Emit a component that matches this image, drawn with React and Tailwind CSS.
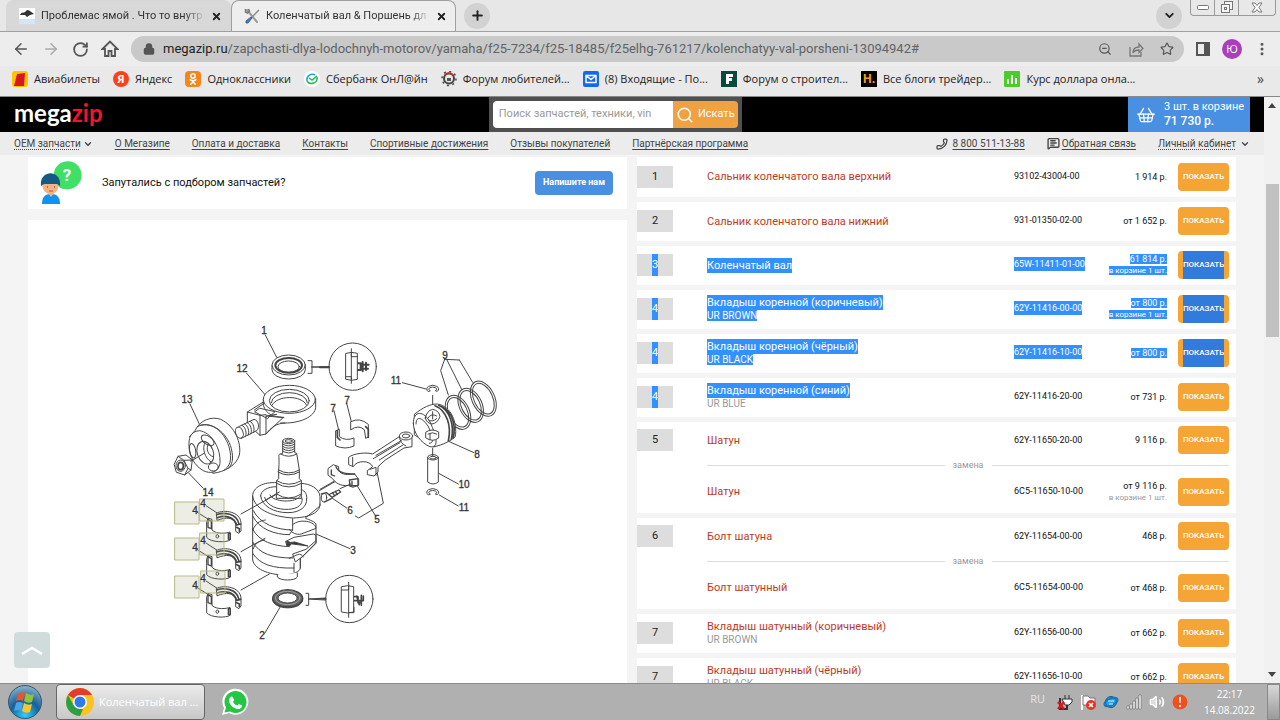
import React from "react";
import {
  ArrowLeft,
  ArrowRight,
  RotateCw,
  Lock,
  ZoomOut,
  Star,
  Search,
  ChevronDown,
  Plus,
  X,
  EllipsisVertical,
  Phone,
  MessageSquareText,
  ShoppingBasket,
  Volume2,
} from "lucide-react";
import { FaOdnoklassniki } from "react-icons/fa";

const parts = [
  {
    num: "1",
    items: [{ title: "Сальник коленчатого вала верхний", code: "93102-43004-00", price: "1 914 р." }],
  },
  {
    num: "2",
    items: [{ title: "Сальник коленчатого вала нижний", code: "931-01350-02-00", price: "от 1 652 р." }],
  },
  {
    num: "3",
    selected: true,
    items: [{ title: "Коленчатый вал", code: "65W-11411-01-00", price: "61 814 р.", cart: "в корзине 1 шт." }],
  },
  {
    num: "4",
    selected: true,
    items: [
      {
        title: "Вкладыш коренной (коричневый)",
        note: "UR BROWN",
        code: "62Y-11416-00-00",
        price: "от 800 р.",
        cart: "в корзине 1 шт.",
      },
    ],
  },
  {
    num: "4",
    selected: true,
    items: [{ title: "Вкладыш коренной (чёрный)", note: "UR BLACK", code: "62Y-11416-10-00", price: "от 800 р." }],
  },
  {
    num: "4",
    titleSelected: true,
    items: [{ title: "Вкладыш коренной (синий)", note: "UR BLUE", code: "62Y-11416-20-00", price: "от 731 р." }],
  },
  {
    num: "5",
    items: [
      { title: "Шатун", code: "62Y-11650-20-00", price: "9 116 р." },
      { title: "Шатун", code: "6C5-11650-10-00", price: "от 9 116 р.", cart: "в корзине 1 шт." },
    ],
  },
  {
    num: "6",
    items: [
      { title: "Болт шатуна", code: "62Y-11654-00-00", price: "468 р." },
      { title: "Болт шатунный", code: "6C5-11654-00-00", price: "от 468 р." },
    ],
  },
  {
    num: "7",
    items: [{ title: "Вкладыш шатунный (коричневый)", note: "UR BROWN", code: "62Y-11656-00-00", price: "от 662 р." }],
  },
  {
    num: "7",
    items: [{ title: "Вкладыш шатунный (чёрный)", note: "UR BLACK", code: "62Y-11656-10-00", price: "от 662 р." }],
  },
];

const Tab = ({ icon, title, active }) => (
  <div
    className={`flex h-full w-[225px] items-center gap-1.5 rounded-t-lg border border-b-0 pl-3 pr-2 ${
      active ? "border-[#a0a0a0] bg-[#eeeeee]" : "border-[#d6d6d6] bg-[#d8d8d8]"
    }`}
  >
    {icon}
    <span className="min-w-0 flex-1 whitespace-nowrap font-[Roboto,sans-serif] text-[11px] text-[#333] [mask-image:linear-gradient(to_right,black_88%,transparent)]">
      {title}
    </span>
    <button aria-label="Закрыть вкладку">
      <X size={11} strokeWidth={4} color="#222" />
    </button>
  </div>
);

const WindowButtons = () => (
  <div className="flex h-4 self-start rounded-b border border-t-0 border-[#9a9a9a] bg-[#e8e8e8]">
    <button aria-label="Свернуть" className="flex w-6 items-center justify-center border-r border-[#9a9a9a]">
      <svg width="12" height="6" fill="#fff" stroke="#777">
        <rect x="0.5" y="0.5" width="11" height="4" rx="1" />
      </svg>
    </button>
    <button aria-label="Развернуть" className="flex w-6 items-center justify-center border-r border-[#9a9a9a]">
      <svg width="14" height="13" fill="#f5f5f5" stroke="#777">
        <rect x="4.5" y="0.5" width="8" height="8" />
        <rect x="1.5" y="3.5" width="8" height="8" />
        <rect x="4.5" y="6.5" width="2" height="2" />
      </svg>
    </button>
    <button aria-label="Закрыть" className="flex w-9 items-center justify-center">
      <svg width="12" height="11" viewBox="0 0 12 11" fill="#fff" stroke="#777">
        <path d="M1 1h3l2 2.500L8 1h3L8 5.500 11 10H8L6 7.500 4 10H1L4 5.500z" />
      </svg>
    </button>
  </div>
);

const TabStrip = () => (
  <div className="flex h-8 items-center border-b border-[#a0a0a0] bg-[#e7e7e7] pl-1.5 pr-1">
    <div className="flex h-full">
      <Tab
        title="Проблемас ямой . Что то внутр"
        icon={
          <svg width="16" height="16" viewBox="0 0 16 16">
            <rect width="16" height="16" fill="#fff" />
            <path d="M1 7c2-4 4-1 6-4s5 1 8 3l-4 1-3 2-2-2z" fill="#333" />
            <path d="M0 11h16v5H0z" fill="#d4e6f5" />
          </svg>
        }
      />
      <Tab
        active
        title="Коленчатый вал & Поршень дл"
        icon={
          <svg width="16" height="16" viewBox="0 0 16 16" fill="none">
            <path d="M3 2l10 12" stroke="#999" strokeWidth="2" strokeLinecap="round" />
            <path d="M1.500 1v3l2 1 2-2-1-2" stroke="#777" strokeWidth="1.5" />
            <path d="M15 2l-8 8" stroke="#888" strokeWidth="1.5" />
            <path d="M7 9l-5 4v2h2l4-5z" fill="#4d79b8" stroke="#3c6299" />
          </svg>
        }
      />
    </div>
    <button aria-label="Новая вкладка" className="ml-2 flex size-[26px] items-center justify-center rounded-full bg-[#d2d2d2]">
      <Plus size={15} strokeWidth={3} color="#222" />
    </button>
    <button aria-label="Поиск вкладок" className="ml-auto mr-2 flex size-[26px] items-center justify-center rounded-full bg-[#d2d2d2]">
      <ChevronDown size={13} strokeWidth={3.5} color="#222" />
    </button>
    <WindowButtons />
  </div>
);

const Toolbar = () => (
  <div className="flex h-[34px] items-center bg-[#ededed] pl-3 pr-2.5">
    <div className="flex items-center gap-3">
      <button aria-label="Назад"><ArrowLeft size={18} color="#555" /></button>
      <button aria-label="Вперёд"><ArrowRight size={18} color="#aaa" /></button>
      <button aria-label="Обновить"><RotateCw size={17} strokeWidth={2.5} color="#555" /></button>
      <button aria-label="Домой">
        <svg width="18" height="18" fill="none" stroke="#555" strokeWidth="1.8">
          <path d="M1.500 9L9 1.500 16.500 9H14v7h-3.500v-5h-3v5H4V9z" />
        </svg>
      </button>
    </div>
    <div className="ml-3 flex h-[26px] min-w-0 flex-1 items-center rounded-full bg-[#c9c9c9] pl-3 pr-2.5 font-[Roboto,sans-serif] text-[13px]">
      <Lock size={12} strokeWidth={3} color="#555" fill="#555" />
      <label htmlFor="url" className="ml-2 text-[#222]">megazip.ru</label>
      <input
        id="url"
        className="min-w-0 flex-1 bg-transparent text-[#5f6368] outline-none"
        defaultValue="/zapchasti-dlya-lodochnyh-motorov/yamaha/f25-7234/f25-18485/f25elhg-761217/kolenchatyy-val-porsheni-13094942#"
      />
      <div className="flex items-center gap-4">
        <button aria-label="Масштаб"><ZoomOut size={14} color="#555" /></button>
        <button aria-label="Поделиться">
          <svg width="16" height="15" fill="none" stroke="#777" strokeWidth="1.3">
            <path d="M2 5v9h11v-4M5 11c0-4 2-6 6-6V2l4 4.500-4 4V8c-3 0-5 1-6 3z" />
          </svg>
        </button>
        <button aria-label="В закладки"><Star size={14} color="#555" /></button>
      </div>
    </div>
    <button aria-label="Боковая панель" className="ml-3">
      <svg width="14" height="14" fill="none" stroke="#555" strokeWidth="2">
        <rect x="1" y="1" width="12" height="12" />
        <rect x="9" y="1" width="4" height="12" fill="#555" />
      </svg>
    </button>
    <button aria-label="Профиль" className="ml-3 size-5 rounded-full bg-[#a93fbb] text-[11px] leading-5 text-white">Ю</button>
    <button aria-label="Меню" className="ml-3"><EllipsisVertical size={16} strokeWidth={2.5} color="#555" /></button>
  </div>
);

const bookmarks = [
  {
    title: "Авиабилеты",
    icon: <svg width="16" height="16"><rect width="16" height="16" rx="3" fill="#ffc400" /><path d="M5 3l8-1-1 13H2z" fill="#d9161e" /></svg>,
  },
  {
    title: "Яндекс",
    icon: <span className="flex size-4 items-center justify-center rounded-full bg-[#fc3f1d] text-[11px] font-bold leading-4 text-white">Я</span>,
  },
  {
    title: "Одноклассники",
    icon: <span className="flex size-4 items-center justify-center rounded-sm bg-[#f7851c]"><FaOdnoklassniki size={12} color="#fff" /></span>,
  },
  {
    title: "Сбербанк ОнЛ@йн",
    icon: (
      <svg width="16" height="16" fill="none" strokeWidth="1.5">
        <circle cx="8" cy="8" r="8" fill="#fff" />
        <path d="M3 10a5.500 5.500 0 0 1 8-6" stroke="#21a0e8" />
        <path d="M3 10a5.500 5.500 0 0 0 10-4" stroke="#21ba4f" />
        <path d="M5 7l3 2 5-4" stroke="#21ba4f" />
      </svg>
    ),
  },
  {
    title: "Форум любителей...",
    icon: (
      <svg width="16" height="16" fill="none">
        <circle cx="8" cy="7.5" r="5" stroke="#444" strokeWidth="2" />
        <circle cx="8" cy="7.5" r="7" stroke="#444" strokeWidth="1.5" strokeDasharray="2 3.5" />
        <path d="M4 4a5 5 0 0 1 8 0" stroke="#d22" strokeWidth="1.5" />
        <path d="M6 7h4v3H6z" fill="#555" />
      </svg>
    ),
  },
  {
    title: "(8) Входящие - По...",
    icon: (
      <svg width="16" height="16" fill="none" stroke="#fff">
        <rect width="16" height="16" rx="2" fill="#1268f5" stroke="none" />
        <path d="M3 4.500h10v7H3zM3 4.500l5 4 5-4" strokeWidth="1.5" />
      </svg>
    ),
  },
  {
    title: "Форум о строител...",
    icon: <svg width="16" height="16"><rect width="16" height="16" fill="#0a4a3c" /><path d="M5 3h7v3H8v1h3v3H8v3H5z" fill="#fff" /></svg>,
  },
  {
    title: "Все блоги трейдер...",
    icon: <span className="flex size-4 items-center justify-center bg-black text-[12px] font-bold leading-4 text-[#ff9d1c]">H.</span>,
  },
  {
    title: "Курс доллара онла...",
    icon: <svg width="16" height="16"><rect width="16" height="16" rx="1" fill="#4ccc2a" /><path d="M3 8h2v5H3zM7 4h2v9H7zM11 7h2v6h-2z" fill="#fff" /></svg>,
  },
];

const Bookmarks = () => (
  <div className="flex h-[31px] items-center justify-between border-b border-[#888] bg-[#e9e9e9] pb-1 pl-3 pr-4">
    <div className="flex gap-[13px]">
      {bookmarks.map((b) => (
        <a key={b.title} href="#" className="flex items-center gap-1.5 whitespace-nowrap text-[11px] text-[#222]">
          {b.icon}
          {b.title}
        </a>
      ))}
    </div>
    <button aria-label="Другие закладки" className="text-[14px] leading-4 text-[#444]">»</button>
  </div>
);

const SiteHeader = () => (
  <header className="flex h-[35px] items-center justify-between bg-black px-3.5">
    <a href="#" className="pb-1 font-[Lato,sans-serif] text-[24px] font-bold leading-6 text-white">
      mega<span className="text-[#f5132f]">zip</span>
    </a>
    <form className="flex h-full w-[253px] bg-[#505050] p-1" onSubmit={(e) => e.preventDefault()}>
      <input
        aria-label="Поиск"
        placeholder="Поиск запчастей, техники, vin"
        className="min-w-0 flex-1 rounded-l-sm bg-white px-1.5 text-[11px] outline-none placeholder:text-[#999]"
      />
      <button className="flex w-[65px] items-center justify-center gap-1 rounded-r-sm bg-[#f0a142] text-[11px] text-white">
        <Search size={18} />
        Искать
      </button>
    </form>
    <a href="#" className="flex h-full w-[122px] items-center gap-2 whitespace-nowrap bg-[#4a90e2] pl-2 text-[11px] leading-[14px] text-white">
      <ShoppingBasket size={20} strokeWidth={1.5} />
      <span>
        3 шт. в корзине
        <br />
        <strong className="text-[12px] font-medium">71 730 р.</strong>
      </span>
    </a>
  </header>
);

const navLinks = ["О Мегазипе", "Оплата и доставка", "Контакты", "Спортивные достижения", "Отзывы покупателей", "Партнёрская программа"];

const SiteNav = () => (
  <nav className="flex h-[23px] items-center justify-between whitespace-nowrap bg-[#ececec] px-3.5 text-[10px] text-[#444]">
    <div className="flex gap-[22px]">
      <a href="#" className="flex items-center gap-0.5">
        <span className="underline decoration-dotted underline-offset-2">OEM запчасти</span>
        <ChevronDown size={10} strokeWidth={3} />
      </a>
      {navLinks.map((l) => (
        <a key={l} href="#" className="underline underline-offset-2">{l}</a>
      ))}
    </div>
    <div className="flex gap-[22px]">
      <a href="#" className="flex items-center gap-1 underline underline-offset-2">
        <Phone size={12} strokeWidth={2.5} className="-scale-x-100" />
        8 800 511-13-88
      </a>
      <a href="#" className="flex items-center gap-0.5 underline underline-offset-2">
        <MessageSquareText size={13} strokeWidth={2.5} />
        Обратная связь
      </a>
      <a href="#" className="flex items-center gap-1">
        <span className="underline decoration-dotted underline-offset-2">Личный кабинет</span>
        <ChevronDown size={10} strokeWidth={3} />
      </a>
    </div>
  </nav>
);

const HelpPanel = () => (
  <section className="flex h-[52px] items-center bg-white pl-3 pr-3.5">
    <svg width="42" height="44" viewBox="0 0 42 44">
      <path d="M16 22a14 14 0 1 1 9 6c-4 0-7-2-9-6z" fill="#3fe065" />
      <text x="27" y="20" textAnchor="middle" fontSize="17" fontWeight="700" fill="#fff">?</text>
      <circle cx="10.500" cy="25" r="8" fill="#f5b183" />
      <path d="M1 25C-1 8 22 8 20 25l-3-2H4z" fill="#145a86" />
      <path d="M2 43c0-7 3-10 9-10s9 3 9 10z" fill="#0f92f0" />
      <path d="M8 32h6l-3 4z" fill="#f5b183" />
      <path d="M9 30h4" stroke="#b4552d" />
      <path d="M7 26h1M14 26h1" stroke="#333" />
    </svg>
    <p className="ml-5 flex-1 text-[11px] text-[#111]">Запутались с подбором запчастей?</p>
    <button className="h-6 w-[78px] rounded-sm bg-[#4a90e2] text-[9px] font-bold text-white">Напишите нам</button>
  </section>
);

// Pair of main bearing shells, drawn once per crank journal
const Bearing = ({ y }) => (
  <g transform={`translate(0 ${y})`}>
    <path d="M170 99C192 88 240 94 243 128V152l-6 8-10-6v-22C222 112 198 110 172 121z" />
    <path d="M170 104c22-8 60-4 66 26M172 113c22-8 50-4 58 22M230 135l12-3M230 142l8 4v8" strokeWidth="5" />
    <path d="M140 145V172C152 188 200 188 210 180V156C200 160 170 164 156 150V118l-12-4-4 12z" />
    <path d="M144 118l10 6v22l-10-4zM205 160v18h6v-18z" strokeWidth="4" />
    <ellipse cx="172" cy="169" rx="4" ry="5" />
    <path d="M112 97L145 118M138 77L170 98" />
  </g>
);

const labels = [
  ["1", 264, 334], ["12", 242, 372], ["13", 187, 403], ["14", 208, 496], ["7", 347, 404], ["7", 333, 412],
  ["11", 396, 384], ["9", 445, 359], ["8", 477, 458], ["10", 464, 488], ["11", 464, 511], ["6", 350, 514],
  ["5", 377, 523], ["3", 353, 554], ["2", 262, 639], ["4", 195, 514], ["4", 203, 507], ["4", 195, 551],
  ["4", 203, 544], ["4", 195, 589], ["4", 203, 582],
];

const hotspots = [
  [175, 502], [200, 499], [175, 538], [200, 533], [175, 576], [201, 571],
];

const Diagram = () => (
  <svg width="363" height="330" viewBox="146 320 363 330" fill="none" stroke="#444" strokeLinejoin="round" strokeLinecap="round">
    {/* upper seal, eccentric, flywheel, nut */}
    <g transform="translate(160 320) scale(.33333)" strokeWidth="3">
      <path d="M336 137v12A50 28 0 0 0 436 149V137" fill="#fff" />
      <ellipse cx="386" cy="135" rx="50" ry="30" fill="#fff" />
      <ellipse cx="386" cy="136" rx="40" ry="22" strokeWidth="6" />
      <ellipse cx="386" cy="140" rx="32" ry="17" />
      <path d="M316 45L350 112M444 122h12v38h-12M260 160L316 225M90 252L118 312M85 458L130 505" />
      <path d="M456 141H508" strokeWidth="5" />
      <path d="M310 236V256C320 285 340 290 370 292L318 342M467 236V262C465 290 420 312 362 309M310 246L262 276V312L300 346 318 342V288L372 293" fill="#fff" />
      <ellipse cx="388" cy="238" rx="78" ry="42" fill="#fff" />
      <ellipse cx="388" cy="242" rx="60" ry="34" />
      <path d="M334 248a54 30 0 0 1 108 0M336 256C350 225 426 224 440 256" />
      <path d="M262 276L300 286 318 284M300 286V346M300 265L345 275 322 296 285 276zM283 270L312 250M318 288L350 283M318 342C335 320 350 310 375 309" />
      <path d="M236 320L282 298C296 300 300 324 290 332L244 355" fill="#fff" />
      <ellipse cx="238" cy="338" rx="11" ry="17" transform="rotate(-20 238 338)" />
      <path d="M246 316c10 4 16 24 10 34M254 312c10 4 16 24 10 34M262 308c10 4 16 24 10 34M270 304c10 4 16 24 10 34" />
      <path d="M106 330C120 300 155 288 182 298 225 318 245 370 238 405 230 435 195 456 158 460L90 350z" fill="#fff" />
      <path d="M112 320C150 300 190 330 207 380 218 420 210 440 190 452M120 316C155 306 200 335 214 385 222 420 216 435 204 446" />
      <path d="M90 350C80 385 92 430 130 452 160 466 182 450 180 420 180 380 152 336 118 332 104 333 95 340 90 350z" fill="#fff" />
      <ellipse cx="143" cy="361" rx="22" ry="12" transform="rotate(35 143 361)" />
      <ellipse cx="98" cy="392" rx="9" ry="22" transform="rotate(-10 98 392)" />
      <ellipse cx="136" cy="398" rx="24" ry="35" transform="rotate(-20 136 398)" />
      <path d="M135 368C125 385 135 415 152 425M145 372c-8 12-2 34 14 38" />
      <ellipse cx="160" cy="441" rx="15" ry="12" />
      <path d="M43 432L54 409 78 405 97 420 93 450 74 465 50 457zM54 409l18 12 25-1M72 421l12 24-10 20M84 445l9 5" fill="#fff" />
      <ellipse cx="62" cy="437" rx="14" ry="17" />
      <ellipse cx="62" cy="438" rx="8" ry="11" strokeWidth="5" />
      <path d="M92 424L132 400" />
    </g>

    {/* crankshaft, bearings, lower seal */}
    <g transform="translate(160 480) scale(.33333)" strokeWidth="3">
      <path d="M350 8C310 5 278 22 278 48V240C284 272 340 286 372 284 400 284 421 274 421 264V236L468 188V132C462 122 440 118 436 114L480 78V50C478 24 450 12 424 10V55H350z" fill="#fff" />
      <path d="M278 48C282 85 330 110 400 114 450 112 480 98 480 72M302 48C306 78 340 98 384 98 420 98 442 80 440 56M302 48c0-16 20-28 48-28M424 28c12 6 18 16 16 28M314 52c6 26 40 38 72 36 28-2 44-14 40-34M330 45c8 22 80 26 92 2" />
      <path d="M280 92c20 40 70 58 118 58M278 108c20 40 66 56 110 56M278 148c20 36 60 50 110 52M278 186c20 36 60 48 120 48M278 220c22 34 60 46 124 44M278 150c10-20 20-28 38-30M280 206c4-14 14-22 34-26" />
      <path d="M398 116V150L388 164M398 134C420 114 466 124 468 145L424 162C410 166 395 158 388 148M378 184l24-12 58-10 8 4v24l-38 38-24 18-8-24 40-14 30-26" />
      <path d="M378 184c20 0 20 14 4 14zM382 190l62 8-40-12z" fill="#333" />
      <path d="M388 235c24-10 32-20 42-4M402 250v26M421 236v28" />
      <path d="M352 283v8c8 12 54 12 60 0v-12" fill="#fff" />
      <path d="M243 102L358 38M243 215L315 175M243 330L328 282M478 32L530 2M468 162L570 206M314 460L360 382" />
      <path d="M438 340h8v36h-8" />
      <path d="M446 357L498 354v5z" fill="#333" />
      <path d="M338 355v6c8 30 82 30 90 0v-6" fill="#555" />
      <ellipse cx="383" cy="355" rx="45" ry="26" fill="#666" strokeWidth="4" />
      <ellipse cx="383" cy="354" rx="37" ry="20" stroke="#bbb" strokeWidth="2" />
      <ellipse cx="383" cy="354" rx="29" ry="15" fill="#fff" />
      <circle cx="568" cy="357" r="71" />
      <path d="M545 320q18-6 36 0V396q-18 6-36 0zM566 307V412M545 330h21v-12M566 398h16v-16" />
      <path d="M584 350h10v18h10M584 362h26v-14M590 348l8 26M604 346v30" strokeWidth="5" />
      <Bearing y={0} />
      <Bearing y={112} />
      <Bearing y={226} />
    </g>

    {/* shaft nose */}
    <g transform="translate(160 320) scale(.33333)" strokeWidth="3">
      <path d="M368 363V400C350 404 360 400 356 450V476L350 482V522q36 24 74 0V482L418 476V450L410 400 404 398V363" fill="#fff" />
      <ellipse cx="386" cy="363" rx="18" ry="8" fill="#fff" />
      <ellipse cx="386" cy="363" rx="11" ry="4" />
      <path d="M368 372q18 12 36 0M368 379q18 12 36 0M368 386q18 12 36 0M368 393q18 12 36 0M362 402q24 14 48 0M356 450q30 18 62 0M354 456q30 18 64 0M350 482q36 22 74 0M350 490q36 22 74 0M320 538L358 516" />
    </g>

    {/* piston, rings, connecting rod */}
    <g transform="translate(320 320) scale(.33333)" strokeWidth="3">
      <circle cx="98" cy="140" r="71" />
      <path d="M0 142H27" strokeWidth="6" />
      <path d="M78 100q17-6 34 0V178q-17 6-34 0zM94 86V190M94 100v10h18M78 170h16v10" />
      <path d="M114 130h8v20h-8M122 134h24M122 146h22M128 126v28M138 128v22" strokeWidth="6" />
      <path d="M80 250L94 305M42 272L56 330M247 188L318 207M374 118L418 120M374 118L362 152 385 225M380 118L425 208M418 120L458 187M388 365L462 398M356 460L415 492M358 525L415 558" />
      <path d="M93 305q26-14 52 8v38l-8 4-4-26q-18-16-40 0zM48 332l10-4v22q20 14 44 4v24q-26 12-54 0z" fill="#fff" />
      <path d="M137 320l8 8v24M52 332v20l8 8" strokeWidth="5" />
      <path d="M324 214A18 11 0 1 1 352 214L346 212A12 6 0 1 0 330 212zM324 524A18 11 0 1 1 352 524L346 522A12 6 0 1 0 330 522zM338 226V275M338 385v22" />
      <g strokeWidth="3">
        <ellipse cx="490" cy="236" rx="34" ry="56" transform="rotate(-25 490 236)" />
        <ellipse cx="490" cy="236" rx="28" ry="49" transform="rotate(-25 490 236)" />
        <ellipse cx="452" cy="256" rx="34" ry="54" transform="rotate(-25 452 256)" />
        <ellipse cx="452" cy="256" rx="28" ry="47" transform="rotate(-25 452 256)" />
        <ellipse cx="414" cy="277" rx="34" ry="54" transform="rotate(-25 414 277)" />
        <ellipse cx="414" cy="277" rx="28" ry="47" transform="rotate(-25 414 277)" />
      </g>
      <path d="M284 282C310 262 330 252 352 252 395 258 412 310 406 350 390 364 370 374 340 381L284 345z" fill="#fff" />
      <path d="M356 256c34 14 48 62 38 102M366 260c32 14 42 58 34 94M345 257c36 14 50 62 40 106" strokeWidth="5" />
      <path d="M280 310C280 270 312 270 332 310 352 355 356 385 330 380 304 370 280 340 280 310z" fill="#fff" />
      <path d="M288 312c0-26 18-20 36 6 16 32 20 52 4 52" />
      <path d="M316 294q4-22 22-26 20 4 22 22-8 20-24 22-16-2-20-18zM324 294q10-16 26-6M326 300q10 8 24-4M338 275v22" />
      <path d="M318 336q18-12 38 0v18q-18 14-38 0zM324 342q14-8 26 0M330 342v16" fill="#fff" />
      <path d="M323 412V486q16 12 32 0V412" fill="#fff" />
      <ellipse cx="339" cy="412" rx="16" ry="8" />
      <ellipse cx="339" cy="413" rx="10" ry="4" />
      <path d="M238 350L158 402C140 396 100 400 86 412V434l14 6C110 420 150 420 158 440L142 452V464l20 4 12-12V440L196 420 252 384 276 380V348z" fill="#fff" />
      <ellipse cx="258" cy="348" rx="20" ry="12" fill="#fff" />
      <ellipse cx="258" cy="348" rx="11" ry="6" />
      <path d="M168 406L244 362M178 420L250 374M160 416L240 368M238 350q2 20 20 28M98 412v26M150 448l18-6v24" />
      <path d="M25 445L40 434 56 440V452C66 466 84 464 104 462L116 478V496L98 502 86 496C60 500 44 486 38 476L25 466z" fill="#fff" />
      <path d="M48 440C56 460 80 462 104 462M34 450v14l10 4M88 480l26-4v20l-24 2zM96 484v10" strokeWidth="4" />
      <ellipse cx="12" cy="533" rx="8" ry="13" fill="#fff" />
      <path d="M4 522L20 518 34 530M14 546L34 536M30 522L56 510 62 516 36 532M38 518l6 10M46 514l6 10" strokeWidth="4" />
      <path d="M60 506L92 492M36 534L80 564M168 590L112 498M106 588L116 594 190 550 172 460M0 508L42 484" />
    </g>

    {hotspots.map(([x, y]) => (
      <rect key={`${x}-${y}`} x={x} y={y} width="24" height="22" fill="#8a8f5a" fillOpacity=".16" stroke="#b9b98a" />
    ))}
    <g fill="#333" stroke="#333" strokeWidth=".3" fontSize="10" textAnchor="middle" className="font-['Liberation_Sans',sans-serif]">
      {labels.map(([t, x, y]) => (
        <text key={`${x}-${y}`} x={x} y={y}>{t}</text>
      ))}
    </g>
  </svg>
);

const mark = "bg-[#3390ff] text-white";

const PartCells = ({ item, selected, titleSelected }) => (
  <>
    <td className="text-[11px] leading-[13px]">
      <a href="#" className={selected || titleSelected ? `${mark} py-px` : "text-[#bf3a1d]"}>{item.title}</a>
      {item.note && (
        <div className="text-[10px]">
          <span className={selected ? mark : "text-[#999]"}>{item.note}</span>
        </div>
      )}
    </td>
    <td className="whitespace-nowrap text-[9px] text-[#111]">
      <span className={selected ? `${mark} py-0.5` : ""}>{item.code}</span>
    </td>
    <td className="whitespace-nowrap text-right text-[9px] leading-3 text-[#111]">
      <span className={selected ? mark : ""}>{item.price}</span>
      {item.cart && (
        <div className="text-[8px]">
          <span className={selected ? mark : "text-[#999]"}>{item.cart}</span>
        </div>
      )}
    </td>
    <td className="pl-[11px]">
      <button className="block h-7 w-[51px] rounded-sm bg-[#f5a536] px-[5px] text-[8px] font-medium text-white">
        <span className={`flex h-full items-center justify-center ${selected ? "bg-[#307bdb]" : ""}`}>ПОКАЗАТЬ</span>
      </button>
    </td>
  </>
);

// The first row has no divider above it, so it is a little lower than the rest
const rowHeight = (group, i, j) => {
  if (i === 0) return "h-[42px]";
  return j === 0 && group.items.length > 1 ? "h-10" : "h-11";
};

const PartsTable = () => (
  <table className="w-full table-fixed border-collapse">
    <colgroup>
      <col className="w-[70px]" />
      <col />
      <col className="w-[84px]" />
      <col className="w-[69px]" />
      <col className="w-[69px]" />
    </colgroup>
    {parts.map((group, i) => (
      <tbody key={i} className="border-b-[5px] border-[#f4f4f4] bg-white">
        {group.items.map((item, j) => (
          <React.Fragment key={j}>
            {j > 0 && (
              <tr>
                <td />
                <td colSpan={4} className="pr-[7px]">
                  <div className="flex items-center gap-2 text-[9px] leading-[12px] text-[#999] before:h-px before:flex-1 before:bg-[#ddd] after:h-px after:flex-1 after:bg-[#ddd]">
                    замена
                  </div>
                </td>
              </tr>
            )}
            <tr className={rowHeight(group, i, j)}>
              <td>
                {j === 0 && (
                  <div className="flex h-[22px] w-9 items-center justify-center bg-[#ddd] text-[11px] text-[#222]">
                    <span className={group.selected || group.titleSelected ? `${mark} leading-[22px]` : ""}>{group.num}</span>
                  </div>
                )}
              </td>
              <PartCells item={item} selected={group.selected} titleSelected={group.titleSelected} />
            </tr>
          </React.Fragment>
        ))}
      </tbody>
    ))}
  </table>
);

const Scrollbar = () => (
  <div className="flex w-4 flex-col items-center bg-[#f1f1f1] py-1.5 text-[#444]">
    <svg width="8" height="5"><path d="M0 5l4-5 4 5z" fill="currentColor" /></svg>
    <div className="flex w-full flex-1 flex-col items-center pb-2 pt-1">
      <div className="grow-[72]" />
      <div className="w-[13px] grow-[153] bg-[#c1c1c1]" />
      <div className="grow-[328]" />
    </div>
    <svg width="8" height="5"><path d="M0 0l4 5 4-5z" fill="currentColor" /></svg>
  </div>
);

const Taskbar = () => (
  <footer className="flex h-[37px] shrink-0 items-center border-t border-[#8c8c8c] bg-[#b0b0b0] pl-2 text-white">
    <button aria-label="Пуск">
      <svg width="34" height="34" viewBox="0 0 34 34">
        <defs>
          <radialGradient id="orb" cx=".5" cy=".9" r=".9">
            <stop offset="0" stopColor="#2fd0ff" />
            <stop offset=".5" stopColor="#14609a" />
            <stop offset="1" stopColor="#8fb3cc" />
          </radialGradient>
        </defs>
        <circle cx="17" cy="17" r="16.5" fill="url(#orb)" stroke="#35566e" />
        <path d="M10 9q4-3 7-1l-2 8q-3-2-7 0z" fill="#e8562a" />
        <path d="M18 8q4 3 8 1l-2 8q-4 2-8-1z" fill="#8fc43f" />
        <path d="M8 18q3-2 7 0l-2 8q-3-2-7 0z" fill="#4aa5e8" />
        <path d="M16 18q4 3 8 1l-2 8q-4 2-8-1z" fill="#fcc52a" />
      </svg>
    </button>
    <button className="ml-3.5 flex h-full w-[149px] items-center gap-1 rounded-sm border border-[#666] bg-linear-to-b from-[#ebebeb] to-[#c8c8c8] pl-2 text-[11px]">
      <svg width="30" height="30" viewBox="0 0 30 30">
        <circle cx="15" cy="15" r="14" fill="#fcc31e" />
        <path d="M15 15L2.900 8A14 14 0 0 1 27.100 8H15z" fill="#e33b2e" />
        <path d="M15 29A14 14 0 0 1 2.900 8L9 18.500 15 22l3 0z" fill="#2a9f47" />
        <circle cx="15" cy="15" r="7" fill="#fff" />
        <circle cx="15" cy="15" r="5.5" fill="#2f7bea" />
      </svg>
      <span className="whitespace-nowrap">Коленчатый вал ...</span>
    </button>
    <button aria-label="WhatsApp" className="ml-4">
      <svg width="28" height="28" viewBox="0 0 28 28">
        <path d="M1 27l2-7A13 13 0 1 1 8 25z" fill="#fff" />
        <path d="M3.500 24.500l1.500-5a11 11 0 1 1 4 4z" fill="#25c644" />
        <path d="M9 9.500c1-1.500 2.500-1.500 3 0l1 2.500c0 1-1 1.500-1 2 1 2 2.500 3 4 3.500 1 0 1.500-1.500 2-1.500l3 1.500c0 3-3 4-5 3.500-4-1-7.500-4.500-8-8 0-1.500.5-3 1-3.500z" fill="#fff" />
      </svg>
    </button>
    <span className="ml-auto pb-1.5 text-[11px] text-[#e6e6e6]">RU</span>
    <div className="ml-3 flex items-center gap-[7px]">
      <svg width="16" height="16" fill="none">
        <path d="M8 1v4M12 1v4M5 5h10v3l-3 3H8z" fill="#fff" stroke="#333" />
        <path d="M10 11v4H3V4" stroke="#333" strokeWidth="2" />
        <path d="M1 8l6 7M7 8l-6 7" stroke="#e01515" strokeWidth="2.5" />
      </svg>
      <svg width="16" height="16" fill="none">
        <path d="M2 1v15" stroke="#fff" strokeWidth="2" />
        <path d="M3 2h5l2 2h5v7H3z" fill="#fff" stroke="#777" />
        <circle cx="11" cy="11" r="5" fill="#e0352b" />
        <path d="M9 9l4 4M13 9l-4 4" stroke="#fff" strokeWidth="1.5" />
      </svg>
      <svg width="16" height="16" fill="none">
        <circle cx="8" cy="8" r="5.5" fill="#27a4e6" stroke="#14598c" />
        <ellipse cx="8" cy="8" rx="7" ry="3.5" stroke="#1777b8" strokeWidth="2" transform="rotate(-25 8 8)" />
        <path d="M5 7h6M6 10h4" stroke="#d8f4ff" />
      </svg>
      <svg width="16" height="16" fill="#fff" stroke="#666" strokeWidth=".6">
        <path d="M1 12h2v3H1zM4 10h2v5H4zM7 7h2v8H7zM10 4h2v11h-2zM13 1h2v14h-2z" />
      </svg>
      <Volume2 size={16} color="#fff" fill="#ddd" />
      <svg width="16" height="16">
        <circle cx="8" cy="8" r="7.5" fill="#f0501e" />
        <path d="M7 3h2l-.5 6h-1zM7 11h2v2H7z" fill="#fff" />
      </svg>
    </div>
    <div className="ml-4 text-center text-[10px] leading-4">
      22:17
      <br />
      14.08.2022
    </div>
    <button aria-label="Свернуть все окна" className="ml-3 h-full w-[13px] border border-[#888] bg-linear-to-b from-[#d8d8d8] to-[#9a9a9a]" />
  </footer>
);

const App = () => {
  return (
    <div className="flex h-screen flex-col overflow-hidden bg-[#f4f4f4] font-['Open_Sans',sans-serif]">
      <TabStrip />
      <Toolbar />
      <Bookmarks />

      <div className="flex min-h-0 flex-1">
        <div className="relative flex min-w-0 flex-1 flex-col font-[Roboto,sans-serif]">
          <SiteHeader />
          <SiteNav />
          <main className="grid min-h-0 flex-1 grid-cols-2 gap-2.5 overflow-hidden px-7 pt-0.5">
            <div className="flex flex-col gap-[11px]">
              <HelpPanel />
              <section className="flex flex-1 justify-center bg-white pt-[100px]">
                <Diagram />
              </section>
            </div>
            <div>
              <PartsTable />
            </div>
          </main>
          <button
            aria-label="Наверх"
            className="absolute bottom-[15px] left-3.5 flex size-9 items-center justify-center rounded-sm bg-[#d0dbdb]"
          >
            <svg width="22" height="9" fill="none" stroke="#fff" strokeWidth="2.5">
              <path d="M1 8l10-6 10 6" />
            </svg>
          </button>
        </div>
        <Scrollbar />
      </div>

      <Taskbar />
    </div>
  );
};

export default App;
